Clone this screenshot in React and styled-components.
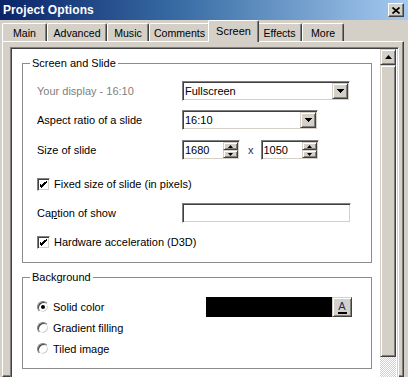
import React from "react"
import styled, { createGlobalStyle } from "styled-components"

const GlobalStyle = createGlobalStyle`
  html, body {
    margin: 0;
    padding: 0;
    background: #d4d0c8;
  }
  body {
    font-family: "Liberation Sans", Arial, sans-serif;
    font-size: 11px;
    color: #000;
  }
`

const tabs = [
  { name: "Main", w: 45 },
  { name: "Advanced", w: 60 },
  { name: "Music", w: 42 },
  { name: "Comments", w: 61 },
  { name: "Screen", w: 51, active: true },
  { name: "Effects", w: 45 },
  { name: "More", w: 42 },
]

// sunken 3d edge used by edits, combos, checkboxes
const sunken = `
  border: 1px solid;
  border-color: #808080 #ffffff #ffffff #808080;
  box-shadow: inset 1px 1px #404040, inset -1px -1px #d4d0c8;
`
// raised 3d edge used by buttons
const raised = `
  border: 1px solid;
  border-color: #d4d0c8 #404040 #404040 #d4d0c8;
  box-shadow: inset 1px 1px #ffffff, inset -1px -1px #808080;
`

function DownArrow() {
  return (
    <svg width="7" height="4" viewBox="0 0 7 4" shapeRendering="crispEdges">
      <path d="M0 0h7L3.5 4z" fill="#000" />
    </svg>
  )
}

function UpArrow({ w = 7, h = 4 }) {
  return (
    <svg width={w} height={h} viewBox={`0 0 ${w} ${h}`}>
      <path d={`M0 ${h}h${w}L${w / 2} 0z`} fill="#000" />
    </svg>
  )
}

function Combo({ width, value }) {
  return (
    <ComboBox $w={width}>
      <FieldText>{value}</FieldText>
      <DropButton>
        <DownArrow />
      </DropButton>
    </ComboBox>
  )
}

function Spin({ value }) {
  return (
    <SpinBox>
      <FieldText>{value}</FieldText>
      <SpinButtons>
        <SpinButton>
          <UpArrow w={5} h={3} />
        </SpinButton>
        <SpinButton $down>
          <UpArrow w={5} h={3} />
        </SpinButton>
      </SpinButtons>
    </SpinBox>
  )
}

function Check({ children }) {
  return (
    <Row>
      <CheckBox>
        <svg width="7" height="7" viewBox="0 0 7 7" shapeRendering="crispEdges">
          <path
            d="M6 0h1v2h-1v1h-1v1h-1v1h-1v1h-1v1h-1v-1h-1v-1h-1v-3h1v1h1v1h1v-1h1v-1h1v-1h1z"
            fill="#000"
          />
        </svg>
      </CheckBox>
      <OptionText>{children}</OptionText>
    </Row>
  )
}

function Radio({ checked, children, extra }) {
  return (
    <Row>
      <RadioLabel>
        <RadioCircle>{checked && <RadioDot />}</RadioCircle>
        <OptionText>{children}</OptionText>
      </RadioLabel>
      {extra}
    </Row>
  )
}

export default function App() {
  return (
    <>
      <GlobalStyle />
      <Window>
        <TitleBar>
          <Title>Project Options</Title>
          <CloseButton>
            <svg width="8" height="7" viewBox="0 0 8 7">
              <path d="M0.5 0.5L7.5 6.5M7.5 0.5L0.5 6.5" stroke="#000" strokeWidth="1.7" />
            </svg>
          </CloseButton>
        </TitleBar>
        <TabStrip>
          {tabs.map(t => (
            <Tab key={t.name} $w={t.w} $active={t.active}>
              {t.name}
            </Tab>
          ))}
        </TabStrip>
        <TabPanel>
          <ScrollArea>
            <Content>
              <Group>
                <Legend>Screen and Slide</Legend>
                <GroupBody $pt={11} $pb={10}>
                  <Row>
                    <Label $disabled>Your display - 16:10</Label>
                    <Combo width={168} value="Fullscreen" />
                  </Row>
                  <Row $mt={9}>
                    <Label>Aspect ratio of a slide</Label>
                    <Combo width={136} value="16:10" />
                  </Row>
                  <Row $mt={10}>
                    <Label>Size of slide</Label>
                    <Spin value="1680" />
                    <Times>x</Times>
                    <Spin value="1050" />
                  </Row>
                  <RowGap $h={14} />
                  <Check>Fixed size of slide (in pixels)</Check>
                  <Row $mt={9}>
                    <Label>
                      Ca<u>p</u>tion of show
                    </Label>
                    <TextBox />
                  </Row>
                  <RowGap $h={9} />
                  <Check>Hardware acceleration (D3D)</Check>
                </GroupBody>
              </Group>
              <Group $mt={8}>
                <Legend>Background</Legend>
                <GroupBody $pt={13} $pb={9}>
                  <Radio
                    checked
                    extra={
                      <ColorPicker>
                        <ColorSwatch />
                        <ColorButton>
                          <Glyph>A</Glyph>
                          <GlyphBar />
                        </ColorButton>
                      </ColorPicker>
                    }
                  >
                    Solid color
                  </Radio>
                  <RowGap $h={1} />
                  <Radio>Gradient filling</Radio>
                  <RowGap $h={1} />
                  <Radio>Tiled image</Radio>
                </GroupBody>
              </Group>
            </Content>
            <ScrollBar>
              <ScrollButton>
                <UpArrow />
              </ScrollButton>
              <Thumb />
              <Track />
            </ScrollBar>
          </ScrollArea>
        </TabPanel>
      </Window>
    </>
  )
}

const Window = styled.div`
  width: 408px;
  height: 377px;
  overflow: hidden;
  background: #d4d0c8;
  display: flex;
  flex-direction: column;
`
const TitleBar = styled.div`
  flex-shrink: 0;
  height: 20px;
  display: flex;
  align-items: center;
  justify-content: space-between;
  padding: 0 4px 0 3px;
  background: linear-gradient(to right, #0a246a, #3a6ea5 45%, #a6caf0);
`
const Title = styled.span`
  color: #fff;
  font-weight: bold;
  font-size: 12px;
  letter-spacing: 0.1px;
`
const CloseButton = styled.div`
  box-sizing: border-box;
  width: 16px;
  height: 14px;
  background: #d4d0c8;
  display: flex;
  align-items: center;
  justify-content: center;
  ${raised}
  border-color: #ffffff #404040 #404040 #ffffff;
  box-shadow: inset -1px -1px #808080;
`
const TabStrip = styled.div`
  flex-shrink: 0;
  height: 21px;
  padding-left: 2px;
  display: flex;
  align-items: flex-end;
  position: relative;
  z-index: 1;
`
const Tab = styled.div`
  box-sizing: border-box;
  width: ${p => p.$w}px;
  height: ${p => (p.$active ? 22 : 18)}px;
  margin: 0 ${p => (p.$active ? -2 : 0)}px ${p => (p.$active ? -1 : 0)}px;
  padding-bottom: ${p => (p.$active ? 2 : 0)}px;
  display: flex;
  align-items: center;
  justify-content: center;
  font-size: ${p => (p.$active ? 11 : 10.6)}px;
  background: #d4d0c8;
  border-top: 1px solid #fff;
  border-left: 1px solid #fff;
  border-right: 1px solid #404040;
  border-radius: 2px 2px 0 0;
  box-shadow: inset -1px 0 #808080;
  position: relative;
  z-index: ${p => (p.$active ? 2 : 1)};
  white-space: nowrap;
`
const TabPanel = styled.div`
  flex: 1;
  min-height: 0;
  margin: 0 4px 0 2px;
  padding: 5px 4px 0 7px;
  border: 1px solid;
  border-color: #ffffff #404040 #404040 #ffffff;
  box-shadow: inset -1px -1px #808080;
  display: flex;
`
const ScrollArea = styled.div`
  flex: 1;
  height: 340px;
  display: flex;
  ${sunken}
  padding: 1px;
  background: #fff;
`
const Content = styled.div`
  width: 368px;
  background: #fff;
  padding: 8px 0 0 10px;
  box-sizing: border-box;
`
const Group = styled.fieldset`
  box-sizing: border-box;
  width: 350px;
  margin: ${p => p.$mt || 0}px 0 0;
  padding: 0;
  min-width: 0;
  border: 1px solid #8c8c8c;
`
const Legend = styled.legend`
  margin-left: 7px;
  padding: 0 2px;
  line-height: 13px;
  font-size: 11px;
`
const GroupBody = styled.div`
  display: flex;
  flex-direction: column;
  padding: ${p => p.$pt}px 0 ${p => p.$pb}px 14px;
`
const Row = styled.div`
  height: 20px;
  margin-top: ${p => p.$mt || 0}px;
  display: flex;
  align-items: center;
`
const RowGap = styled.div`
  height: ${p => p.$h}px;
  flex-shrink: 0;
`
const Label = styled.span`
  width: 145px;
  flex-shrink: 0;
  white-space: nowrap;
  color: ${p => (p.$disabled ? "#808080" : "#000")};
`
const FieldText = styled.span`
  padding-left: 1px;
  line-height: 14px;
  white-space: nowrap;
`
const ComboBox = styled.div`
  box-sizing: border-box;
  width: ${p => p.$w}px;
  height: 20px;
  display: flex;
  align-items: center;
  justify-content: space-between;
  background: #fff;
  ${sunken}
  padding: 1px;
`
const DropButton = styled.div`
  box-sizing: border-box;
  width: 16px;
  height: 16px;
  background: #d4d0c8;
  display: flex;
  align-items: center;
  justify-content: center;
  ${raised}
`
const SpinBox = styled.div`
  box-sizing: border-box;
  width: 58px;
  height: 20px;
  display: flex;
  align-items: center;
  justify-content: space-between;
  background: #fff;
  ${sunken}
  padding: 1px;
`
const SpinButtons = styled.div`
  width: 15px;
  height: 16px;
  display: flex;
  flex-direction: column;
`
const SpinButton = styled.div`
  box-sizing: border-box;
  flex: 1;
  background: #d4d0c8;
  display: flex;
  align-items: center;
  justify-content: center;
  ${raised}
  svg {
    transform: ${p => (p.$down ? "rotate(180deg)" : "none")};
  }
`
const Times = styled.span`
  margin: 0 7px 0 8px;
  color: #1c2f6e;
`
const TextBox = styled.div`
  box-sizing: border-box;
  width: 169px;
  height: 20px;
  background: #fff;
  ${sunken}
`
const CheckBox = styled.div`
  box-sizing: border-box;
  width: 13px;
  height: 13px;
  flex-shrink: 0;
  background: #fff;
  ${sunken}
  display: flex;
  align-items: center;
  justify-content: center;
`
const OptionText = styled.span`
  margin-left: 4px;
  white-space: nowrap;
`
const RadioLabel = styled.div`
  width: 169px;
  display: flex;
  align-items: center;
`
const RadioCircle = styled.div`
  box-sizing: border-box;
  width: 12px;
  height: 12px;
  border-radius: 50%;
  background: #fff;
  ${sunken}
  display: flex;
  align-items: center;
  justify-content: center;
`
const RadioDot = styled.div`
  width: 4px;
  height: 4px;
  border-radius: 50%;
  background: #000;
`
const ColorPicker = styled.div`
  display: flex;
  height: 20px;
`
const ColorSwatch = styled.div`
  width: 126px;
  height: 20px;
  background: #000;
`
const ColorButton = styled.div`
  box-sizing: border-box;
  width: 20px;
  height: 20px;
  background: #d4d0c8;
  ${raised}
  display: flex;
  flex-direction: column;
  align-items: center;
  justify-content: center;
`
const Glyph = styled.span`
  font-size: 11px;
  line-height: 10px;
  color: #1a2a6a;
`
const GlyphBar = styled.div`
  width: 9px;
  height: 2px;
  margin-top: 1px;
  background: #000;
`
const ScrollBar = styled.div`
  width: 16px;
  flex-shrink: 0;
  display: flex;
  flex-direction: column;
  background: repeating-conic-gradient(#ffffff 0 25%, #d4d0c8 0 50%) 0 0 / 2px 2px;
`
const ScrollButton = styled.div`
  box-sizing: border-box;
  height: 16px;
  background: #d4d0c8;
  display: flex;
  align-items: center;
  justify-content: center;
  ${raised}
`
const Thumb = styled.div`
  box-sizing: border-box;
  height: 292px;
  background: #d4d0c8;
  ${raised}
`
const Track = styled.div`
  flex: 1;
`
